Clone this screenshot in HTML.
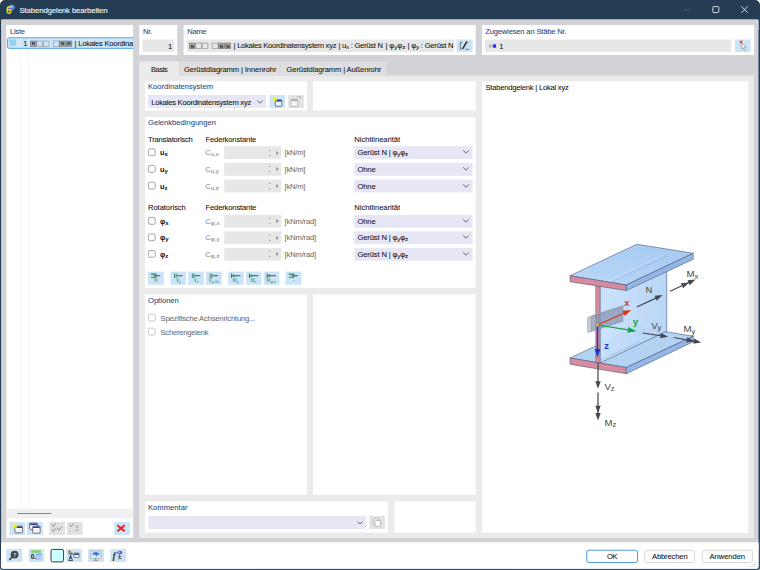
<!DOCTYPE html><html lang="de"><head><meta charset="utf-8"><title>Stabendgelenk bearbeiten</title><style>
html,body{margin:0;padding:0;}
body{width:760px;height:570px;overflow:hidden;background:#243c54;position:relative;font-family:"Liberation Sans", "DejaVu Sans", sans-serif;}
#w div,#w span.t,#w svg{position:absolute;}
#w{position:absolute;left:0;top:0;width:760px;height:570px;overflow:hidden;}
.t{white-space:nowrap;line-height:12px;height:12px;-webkit-text-stroke:0.07px currentColor;}
.t sub{font-size:82%;vertical-align:baseline;position:relative;top:1.1px;line-height:0;}
.cs sub{font-size:84%;top:0.9px;}
i.bn,i.be{display:inline-block;box-sizing:border-box;width:5.8px;height:5.7px;margin-right:0.55px;border:0.65px solid #666;font-style:normal;font-size:4.4px;line-height:4.4px;text-align:center;vertical-align:-0.9px;overflow:hidden;color:#222;font-weight:700;}
i.bn{background:#a2a2a2;border-color:#707070;-webkit-text-stroke:0;}
i.be{border-color:#9c9c9c;}
i.gap{display:inline-block;width:3.85px;}
#t1{letter-spacing:-0.168px;}#t2{letter-spacing:-0.269px;}#t4{letter-spacing:-0.24px;}#t6{letter-spacing:-0.291px;}#n1{letter-spacing:-0.267px;}#n2{letter-spacing:-0.276px;}#n3{letter-spacing:-0.062px;}#n4{letter-spacing:-0.203px;}#t7{letter-spacing:-0.173px;}#t9{letter-spacing:-0.456px;}#t10{letter-spacing:-0.113px;}#t11{letter-spacing:-0.139px;}#t12{letter-spacing:-0.001px;}#t13{letter-spacing:-0.245px;}#t14{letter-spacing:0.001px;}#t15{letter-spacing:-0.2px;}#t16{letter-spacing:-0.149px;}#t17{letter-spacing:-0.008px;}#t18{letter-spacing:-0.057px;}#t19{letter-spacing:-0.149px;}#t20{letter-spacing:-0.008px;}#t23{letter-spacing:-0.223px;}#t24{letter-spacing:-0.144px;}#t27{letter-spacing:-0.223px;}#t28{letter-spacing:-0.145px;}#t31{letter-spacing:-0.223px;}#t32{letter-spacing:-0.145px;}#t35{letter-spacing:-0.169px;}#t36{letter-spacing:-0.145px;}#t39{letter-spacing:-0.169px;}#t40{letter-spacing:-0.144px;}#t43{letter-spacing:-0.169px;}#t44{letter-spacing:-0.144px;}#t45{letter-spacing:-0.004px;}#t46{letter-spacing:-0.162px;}#t47{letter-spacing:-0.221px;}#t48{letter-spacing:0.028px;}#t49{letter-spacing:-0.217px;}#t50{letter-spacing:-0.492px;}#t51{letter-spacing:-0.137px;}#t52{letter-spacing:-0.049px;}#lrow{letter-spacing:-0.248px;}</style></head><body><div id="w"><svg style="left:0;top:0" width="760" height="570" viewBox="0 0 760 570"><rect x="0" y="0" width="760" height="570" fill="#fff"/><rect x="0" y="0" width="760" height="40" rx="5" fill="#243c54"/><rect x="0" y="20" width="760" height="550" fill="#e4e6e8"/><rect x="0" y="20" width="760" height="550" rx="2.5" fill="#3c5268"/><rect x="0" y="10" width="760" height="530" fill="#243c54"/><rect x="0" y="10" width="1" height="550" fill="#243c54"/><rect x="1.1" y="19.5" width="757.4" height="549.2" rx="2" fill="#d2d2d7"/><rect x="1.1" y="19.5" width="757.4" height="10.5" fill="#d2d2d7"/><rect x="1.1" y="542.6" width="757.4" height="26.1" rx="2" fill="#fff"/><rect x="1.1" y="542.6" width="757.4" height="7.4" fill="#fff"/><rect x="6.3" y="25" width="126.9" height="512.7" fill="#fff"/><rect x="20" y="37.5" width="0.6" height="471.0" fill="#eeeef1"/><rect x="28" y="37.5" width="0.6" height="471.0" fill="#eeeef1"/><rect x="7.45" y="37.75" width="132.1" height="10.6" rx="1.8" fill="#cde5f9" stroke="#4a9be0" stroke-width="0.9"/><rect x="133.2" y="30" width="6.0" height="30" fill="#d2d2d7"/><rect x="9.4" y="39.4" width="6.6" height="6.3" fill="#8fd2ee"/><rect x="20.1" y="38.2" width="0.5" height="9.7" fill="#e4effa"/><rect x="28.2" y="38.2" width="0.5" height="9.7" fill="#e4effa"/><rect x="6.3" y="508.7" width="126.9" height="9.6" fill="#f0f0f0"/><rect x="17.5" y="513.1" width="33.8" height="0.9" fill="#7a7a7a"/><rect x="9.5" y="522" width="15.5" height="13" fill="#cce4f7"/><rect x="27" y="522" width="15.8" height="13" fill="#cce4f7"/><rect x="49.3" y="522" width="15.7" height="13" fill="#e2e2e2"/><rect x="67" y="522" width="15.6" height="13" fill="#e2e2e2"/><rect x="114.3" y="522" width="15.7" height="13" fill="#cce4f7"/><rect x="139.2" y="25" width="38.0" height="30" fill="#fff"/><rect x="142.5" y="39.5" width="31.5" height="12.5" fill="#e7e7e7"/><rect x="183.6" y="25" width="292.1" height="30" fill="#fff"/><rect x="187" y="39.5" width="266.8" height="12.5" fill="#e7e7e7"/><rect x="456.5" y="39.5" width="16.0" height="12.5" fill="#cce4f7"/><rect x="482" y="25" width="272.2" height="30" fill="#fff"/><rect x="485" y="39.5" width="246.2" height="12.5" fill="#e7e7e7"/><rect x="489" y="44.5" width="2.5" height="3.0" fill="#b4b4b4"/><rect x="492.8" y="44.3" width="3.3" height="3.4" fill="#2a2aff"/><rect x="735" y="39.5" width="15.6" height="12.5" fill="#cce4f7"/><rect x="139.2" y="75.6" width="614.7" height="462.4" fill="#ebebeb"/><rect x="139.2" y="61.4" width="39.8" height="14.6" fill="#ebebeb"/><rect x="179.6" y="61.8" width="100.0" height="13.8" fill="#dfdfe1"/><rect x="280.3" y="61.8" width="105.7" height="13.8" fill="#dfdfe1"/><rect x="145" y="81.2" width="162" height="29.3" fill="#fff"/><rect x="148" y="95" width="118" height="13" fill="#e6e6f5"/><rect x="269.5" y="95" width="15.5" height="13" fill="#cce4f7"/><rect x="288.2" y="95" width="15.6" height="13" fill="#e2e2e2"/><rect x="313" y="81.2" width="162.7" height="29.3" fill="#fff"/><rect x="145" y="117" width="330.7" height="171" fill="#fff"/><rect x="148.38" y="148.77" width="6.85" height="6.85" rx="1.8" fill="#fff" stroke="#858585" stroke-width="0.75"/><rect x="224.2" y="146.2" width="57.0" height="12.8" fill="#e7e7e7"/><rect x="354.3" y="146.2" width="118.2" height="12.8" fill="#e6e6f5"/><rect x="148.38" y="165.47" width="6.85" height="6.85" rx="1.8" fill="#fff" stroke="#858585" stroke-width="0.75"/><rect x="224.2" y="162.9" width="57.0" height="12.8" fill="#e7e7e7"/><rect x="354.3" y="162.9" width="118.2" height="12.8" fill="#e6e6f5"/><rect x="148.38" y="182.17" width="6.85" height="6.85" rx="1.8" fill="#fff" stroke="#858585" stroke-width="0.75"/><rect x="224.2" y="179.6" width="57.0" height="12.8" fill="#e7e7e7"/><rect x="354.3" y="179.6" width="118.2" height="12.8" fill="#e6e6f5"/><rect x="148.38" y="217.47" width="6.85" height="6.85" rx="1.8" fill="#fff" stroke="#858585" stroke-width="0.75"/><rect x="224.2" y="214.9" width="57.0" height="12.8" fill="#e7e7e7"/><rect x="354.3" y="214.9" width="118.2" height="12.8" fill="#e6e6f5"/><rect x="148.38" y="233.87" width="6.85" height="6.85" rx="1.8" fill="#fff" stroke="#858585" stroke-width="0.75"/><rect x="224.2" y="231.3" width="57.0" height="12.8" fill="#e7e7e7"/><rect x="354.3" y="231.3" width="118.2" height="12.8" fill="#e6e6f5"/><rect x="148.38" y="250.47" width="6.85" height="6.85" rx="1.8" fill="#fff" stroke="#858585" stroke-width="0.75"/><rect x="224.2" y="247.9" width="57.0" height="12.8" fill="#e7e7e7"/><rect x="354.3" y="247.9" width="118.2" height="12.8" fill="#e6e6f5"/><rect x="148" y="271.6" width="15.8" height="13.2" fill="#cce4f7"/><rect x="170.5" y="271.6" width="15.7" height="13.2" fill="#cce4f7"/><rect x="188.3" y="271.6" width="15.5" height="13.2" fill="#cce4f7"/><rect x="206" y="271.6" width="15.7" height="13.2" fill="#cce4f7"/><rect x="228.3" y="271.6" width="15.5" height="13.2" fill="#cce4f7"/><rect x="245.8" y="271.6" width="15.5" height="13.2" fill="#cce4f7"/><rect x="263.7" y="271.6" width="15.6" height="13.2" fill="#cce4f7"/><rect x="285.5" y="271.6" width="16.0" height="13.2" fill="#cce4f7"/><rect x="145" y="294.3" width="162" height="200.3" fill="#fff"/><rect x="148.38" y="314.18" width="6.85" height="6.85" rx="1.8" fill="#fff" stroke="#b5b5b5" stroke-width="0.75"/><rect x="148.38" y="328.18" width="6.85" height="6.85" rx="1.8" fill="#fff" stroke="#b5b5b5" stroke-width="0.75"/><rect x="313" y="294.3" width="162.7" height="200.3" fill="#fff"/><rect x="145" y="501.2" width="243" height="31.4" fill="#fff"/><rect x="148.3" y="516" width="217.7" height="13" fill="#e6e6f5"/><rect x="369.4" y="516" width="15.4" height="13" fill="#e2e2e2"/><rect x="394.6" y="501.2" width="81.1" height="31.4" fill="#fff"/><rect x="482" y="81.2" width="266.3" height="451.4" fill="#fff"/><rect x="6.3" y="549" width="15.7" height="13" fill="#cce4f7"/><rect x="28.8" y="549" width="15.3" height="13" fill="#cce4f7"/><rect x="66.1" y="549" width="15.7" height="13" fill="#cce4f7"/><rect x="88.1" y="549" width="15.9" height="13" fill="#cce4f7"/><rect x="110.3" y="549" width="15.9" height="13" fill="#cce4f7"/><rect x="51.0" y="549.4" width="12.6" height="12.5" rx="1.5" fill="#ccffff" stroke="#3a3a3a" stroke-width="1.0"/><rect x="586.75" y="550.25" width="50.8" height="12.3" rx="2.2" fill="#fdfdfd" stroke="#3b8ad9" stroke-width="0.9"/><rect x="644.75" y="550.25" width="49.8" height="12.3" rx="2.2" fill="#fdfdfd" stroke="#d3d3d3" stroke-width="0.9"/><rect x="702.25" y="550.25" width="50.3" height="12.3" rx="2.2" fill="#fdfdfd" stroke="#d3d3d3" stroke-width="0.9"/></svg><span id="t1" class="t " style="left:19.4px;top:5.0px;font-size:7.9px;color:#fff;font-weight:400;">Stabendgelenk bearbeiten</span><svg style="left:0;top:0" width="24" height="19" viewBox="0 0 24 19">
<polygon points="8.2,7 11.6,4.4 15,6.4 14.2,9.6 11,11.4 8.6,10" fill="#4a7fc4"/>
<polygon points="8.2,7 11.6,4.4 15,6.4 11.6,8.6" fill="#7aa9e2"/>
<text x="6" y="14.3" font-family="Liberation Sans, sans-serif" font-weight="700" font-size="10" fill="#f6d624">6</text>
</svg><svg style="left:680px;top:0" width="76" height="19" viewBox="0 0 76 19">
<line x1="4" y1="10" x2="10.5" y2="10" stroke="#4b6178" stroke-width="0.9"/>
<rect x="32.8" y="6.6" width="6" height="6" rx="1" fill="none" stroke="#e8edf2" stroke-width="0.9"/>
<path d="M61.4 6.4 L67.8 12.8 M67.8 6.4 L61.4 12.8" stroke="#e8edf2" stroke-width="0.9" fill="none"/>
</svg><span id="t2" class="t " style="left:10px;top:26.0px;font-size:7.6px;color:#2c4682;font-weight:400;">Liste</span><span id="t3" class="t " style="left:23.2px;top:38.3px;font-size:7.6px;color:#111;font-weight:400;">1</span><div style="left:28.3px;top:37.6px;width:104.9px;height:12px;overflow:hidden"><span class="t" id="lrow" style="left:46.3px;top:0;font-size:7.6px;color:#111">| Lokales Koordinatensystem xyz</span></div><span id="t4" class="t " style="left:143px;top:26.0px;font-size:7.6px;color:#2c4682;font-weight:400;">Nr.</span><span id="t5" class="t " style="left:168px;top:40.7px;font-size:7.6px;color:#111;font-weight:400;">1</span><span id="t6" class="t " style="left:187.2px;top:26.0px;font-size:7.6px;color:#2c4682;font-weight:400;">Name</span><div style="left:188px;top:39.9px;width:265.6px;height:12px;overflow:hidden"><span class="t" id="n1" style="left:45.6px;top:0;font-size:7.6px;color:#111">| Lokales Koordinatensystem xyz</span><span class="t" id="n2" style="left:150.6px;top:0;font-size:7.6px;color:#111">| u<sub>x</sub> : Gerüst N</span><span class="t" id="n3" style="left:197.4px;top:0;font-size:7.6px;color:#111">| φ<sub>y</sub>φ<sub>z</sub></span><span class="t" id="n4" style="left:219.6px;top:0;font-size:7.6px;color:#111">| φ<sub>y</sub> : Gerüst N</span></div><span id="t7" class="t " style="left:485.2px;top:26.0px;font-size:7.6px;color:#2c4682;font-weight:400;">Zugewiesen an Stäbe Nr.</span><span id="t8" class="t " style="left:499.2px;top:40.7px;font-size:7.6px;color:#111;font-weight:400;">1</span><span id="t9" class="t " style="left:151px;top:64.2px;font-size:7.6px;color:#111;font-weight:400;">Basis</span><span id="t10" class="t " style="left:184px;top:64.2px;font-size:7.6px;color:#111;font-weight:400;">Gerüstdiagramm | Innenrohr</span><span id="t11" class="t " style="left:286.6px;top:64.2px;font-size:7.6px;color:#111;font-weight:400;">Gerüstdiagramm | Außenrohr</span><span id="t12" class="t " style="left:148px;top:81.4px;font-size:7.6px;color:#2c4682;font-weight:400;">Koordinatensystem</span><span id="t13" class="t " style="left:151.3px;top:96.5px;font-size:7.6px;color:#111;font-weight:400;">Lokales Koordinatensystem xyz</span><svg style="left:256px;top:98.5px" width="8" height="6" viewBox="0 0 8 6"><path d="M1.2 1.4 L4 4.2 L6.8 1.4" fill="none" stroke="#444" stroke-width="0.8"/></svg><span id="t14" class="t " style="left:148px;top:117.3px;font-size:7.6px;color:#2c4682;font-weight:400;">Gelenkbedingungen</span><span id="t15" class="t " style="left:148px;top:134.2px;font-size:7.6px;color:#111;font-weight:400;">Translatorisch</span><span id="t16" class="t " style="left:205.5px;top:134.2px;font-size:7.6px;color:#111;font-weight:400;">Federkonstante</span><span id="t17" class="t " style="left:354.3px;top:134.2px;font-size:7.6px;color:#111;font-weight:400;">Nichtlinearität</span><span id="t18" class="t " style="left:148px;top:202.3px;font-size:7.6px;color:#111;font-weight:400;">Rotatorisch</span><span id="t19" class="t " style="left:205.5px;top:202.3px;font-size:7.6px;color:#111;font-weight:400;">Federkonstante</span><span id="t20" class="t " style="left:354.3px;top:202.3px;font-size:7.6px;color:#111;font-weight:400;">Nichtlinearität</span><span id="t21" class="t " style="left:160px;top:147.3px;font-size:7.4px;color:#111;font-weight:700;-webkit-text-stroke:0;">u<sub>x</sub></span><span id="t22" class="t cs" style="left:205.3px;top:147.3px;font-size:7.4px;color:#8a8a8a;font-weight:400;">C<sub>u,x</sub></span><svg style="left:266px;top:146.6px" width="15" height="12" viewBox="0 0 15 12"><path d="M2.6 4.1 L3.8 2.7 L5 4.1 Z M2.6 8.1 L3.8 9.5 L5 8.1 Z" fill="#a2a2a2"/><path d="M10.2 4.1 L12.7 6.1 L10.2 8.1 Z" fill="#8f8f8f"/></svg><span id="t23" class="t " style="left:284.6px;top:147.3px;font-size:7.6px;color:#707070;font-weight:400;">[kN/m]</span><span id="t24" class="t " style="left:357.5px;top:147.3px;font-size:7.6px;color:#111;font-weight:400;">Gerüst N | φ<sub>y</sub>φ<sub>z</sub></span><svg style="left:462px;top:149.2px" width="8" height="6" viewBox="0 0 8 6"><path d="M1.2 1.4 L4 4.2 L6.8 1.4" fill="none" stroke="#444" stroke-width="0.8"/></svg><span id="t25" class="t " style="left:160px;top:164.0px;font-size:7.4px;color:#111;font-weight:700;-webkit-text-stroke:0;">u<sub>y</sub></span><span id="t26" class="t cs" style="left:205.3px;top:164.0px;font-size:7.4px;color:#8a8a8a;font-weight:400;">C<sub>u,y</sub></span><svg style="left:266px;top:163.3px" width="15" height="12" viewBox="0 0 15 12"><path d="M2.6 4.1 L3.8 2.7 L5 4.1 Z M2.6 8.1 L3.8 9.5 L5 8.1 Z" fill="#a2a2a2"/><path d="M10.2 4.1 L12.7 6.1 L10.2 8.1 Z" fill="#8f8f8f"/></svg><span id="t27" class="t " style="left:284.6px;top:164.0px;font-size:7.6px;color:#707070;font-weight:400;">[kN/m]</span><span id="t28" class="t " style="left:357.5px;top:164.0px;font-size:7.6px;color:#111;font-weight:400;">Ohne</span><svg style="left:462px;top:165.9px" width="8" height="6" viewBox="0 0 8 6"><path d="M1.2 1.4 L4 4.2 L6.8 1.4" fill="none" stroke="#444" stroke-width="0.8"/></svg><span id="t29" class="t " style="left:160px;top:180.7px;font-size:7.4px;color:#111;font-weight:700;-webkit-text-stroke:0;">u<sub>z</sub></span><span id="t30" class="t cs" style="left:205.3px;top:180.7px;font-size:7.4px;color:#8a8a8a;font-weight:400;">C<sub>u,z</sub></span><svg style="left:266px;top:180.0px" width="15" height="12" viewBox="0 0 15 12"><path d="M2.6 4.1 L3.8 2.7 L5 4.1 Z M2.6 8.1 L3.8 9.5 L5 8.1 Z" fill="#a2a2a2"/><path d="M10.2 4.1 L12.7 6.1 L10.2 8.1 Z" fill="#8f8f8f"/></svg><span id="t31" class="t " style="left:284.6px;top:180.7px;font-size:7.6px;color:#707070;font-weight:400;">[kN/m]</span><span id="t32" class="t " style="left:357.5px;top:180.7px;font-size:7.6px;color:#111;font-weight:400;">Ohne</span><svg style="left:462px;top:182.6px" width="8" height="6" viewBox="0 0 8 6"><path d="M1.2 1.4 L4 4.2 L6.8 1.4" fill="none" stroke="#444" stroke-width="0.8"/></svg><span id="t33" class="t " style="left:160px;top:216.0px;font-size:7.4px;color:#111;font-weight:700;-webkit-text-stroke:0;">φ<sub>x</sub></span><span id="t34" class="t cs" style="left:205.3px;top:216.0px;font-size:7.4px;color:#8a8a8a;font-weight:400;">C<sub>φ,x</sub></span><svg style="left:266px;top:215.3px" width="15" height="12" viewBox="0 0 15 12"><path d="M2.6 4.1 L3.8 2.7 L5 4.1 Z M2.6 8.1 L3.8 9.5 L5 8.1 Z" fill="#a2a2a2"/><path d="M10.2 4.1 L12.7 6.1 L10.2 8.1 Z" fill="#8f8f8f"/></svg><span id="t35" class="t " style="left:284.6px;top:216.0px;font-size:7.6px;color:#707070;font-weight:400;">[kNm/rad]</span><span id="t36" class="t " style="left:357.5px;top:216.0px;font-size:7.6px;color:#111;font-weight:400;">Ohne</span><svg style="left:462px;top:217.9px" width="8" height="6" viewBox="0 0 8 6"><path d="M1.2 1.4 L4 4.2 L6.8 1.4" fill="none" stroke="#444" stroke-width="0.8"/></svg><span id="t37" class="t " style="left:160px;top:232.4px;font-size:7.4px;color:#111;font-weight:700;-webkit-text-stroke:0;">φ<sub>y</sub></span><span id="t38" class="t cs" style="left:205.3px;top:232.4px;font-size:7.4px;color:#8a8a8a;font-weight:400;">C<sub>φ,y</sub></span><svg style="left:266px;top:231.7px" width="15" height="12" viewBox="0 0 15 12"><path d="M2.6 4.1 L3.8 2.7 L5 4.1 Z M2.6 8.1 L3.8 9.5 L5 8.1 Z" fill="#a2a2a2"/><path d="M10.2 4.1 L12.7 6.1 L10.2 8.1 Z" fill="#8f8f8f"/></svg><span id="t39" class="t " style="left:284.6px;top:232.4px;font-size:7.6px;color:#707070;font-weight:400;">[kNm/rad]</span><span id="t40" class="t " style="left:357.5px;top:232.4px;font-size:7.6px;color:#111;font-weight:400;">Gerüst N | φ<sub>y</sub>φ<sub>z</sub></span><svg style="left:462px;top:234.29999999999998px" width="8" height="6" viewBox="0 0 8 6"><path d="M1.2 1.4 L4 4.2 L6.8 1.4" fill="none" stroke="#444" stroke-width="0.8"/></svg><span id="t41" class="t " style="left:160px;top:249.0px;font-size:7.4px;color:#111;font-weight:700;-webkit-text-stroke:0;">φ<sub>z</sub></span><span id="t42" class="t cs" style="left:205.3px;top:249.0px;font-size:7.4px;color:#8a8a8a;font-weight:400;">C<sub>φ,z</sub></span><svg style="left:266px;top:248.3px" width="15" height="12" viewBox="0 0 15 12"><path d="M2.6 4.1 L3.8 2.7 L5 4.1 Z M2.6 8.1 L3.8 9.5 L5 8.1 Z" fill="#a2a2a2"/><path d="M10.2 4.1 L12.7 6.1 L10.2 8.1 Z" fill="#8f8f8f"/></svg><span id="t43" class="t " style="left:284.6px;top:249.0px;font-size:7.6px;color:#707070;font-weight:400;">[kNm/rad]</span><span id="t44" class="t " style="left:357.5px;top:249.0px;font-size:7.6px;color:#111;font-weight:400;">Gerüst N | φ<sub>y</sub>φ<sub>z</sub></span><svg style="left:462px;top:250.9px" width="8" height="6" viewBox="0 0 8 6"><path d="M1.2 1.4 L4 4.2 L6.8 1.4" fill="none" stroke="#444" stroke-width="0.8"/></svg><span id="t45" class="t " style="left:148px;top:295.3px;font-size:7.6px;color:#2c4682;font-weight:400;">Optionen</span><span id="t46" class="t " style="left:160.5px;top:312.6px;font-size:7.6px;color:#6e6e6e;font-weight:400;">Spezifische Achsenrichtung...</span><span id="t47" class="t " style="left:160.5px;top:326.6px;font-size:7.6px;color:#6e6e6e;font-weight:400;">Scherengelenk</span><span id="t48" class="t " style="left:148px;top:502.3px;font-size:7.6px;color:#2c4682;font-weight:400;">Kommentar</span><svg style="left:356px;top:520px" width="8" height="6" viewBox="0 0 8 6"><path d="M1.6 1.6 L4 4 L6.4 1.6" fill="none" stroke="#444" stroke-width="0.8"/></svg><span id="t49" class="t " style="left:485.5px;top:81.9px;font-size:7.6px;color:#111;font-weight:400;">Stabendgelenk | Lokal xyz</span><span id="t50" class="t " style="left:607px;top:551.3px;font-size:7.6px;color:#111;font-weight:400;">OK</span><span id="t51" class="t " style="left:652px;top:551.3px;font-size:7.6px;color:#111;font-weight:400;">Abbrechen</span><span id="t52" class="t " style="left:709.5px;top:551.3px;font-size:7.6px;color:#111;font-weight:400;">Anwenden</span><svg style="left:0;top:0" width="760" height="570" viewBox="0 0 760 570"><rect x="14.9" y="526.1" width="7.5" height="6.7" rx="0.6" fill="#fff" stroke="#3d3d3d" stroke-width="0.7"/><rect x="15.3" y="526.5" width="6.7" height="1.5" fill="#24408e"/><line x1="15.700000000000001" y1="529.3000000000001" x2="21.599999999999998" y2="529.3000000000001" stroke="#d8d8d8" stroke-width="0.4"/><line x1="15.700000000000001" y1="530.7" x2="21.599999999999998" y2="530.7" stroke="#d8d8d8" stroke-width="0.4"/><polygon points="14.9,523.16 15.42,524.75 16.9,524.0 16.15,525.48 17.73,526.0 16.15,526.52 16.9,528.0 15.42,527.25 14.9,528.84 14.38,527.25 12.9,528.0 13.65,526.52 12.06,526.0 13.65,525.48 12.9,524.0 14.38,524.75" fill="#fbf04a" stroke="#f3e97a" stroke-width="0.25"/><circle cx="14.9" cy="526" r="1.42" fill="#fff200"/><rect x="29.7" y="523.1" width="7.7" height="6.2" rx="0.6" fill="#fff" stroke="#3d3d3d" stroke-width="0.7"/><rect x="30.099999999999998" y="523.5" width="6.9" height="1.5" fill="#24408e"/><line x1="30.5" y1="526.3000000000001" x2="36.6" y2="526.3000000000001" stroke="#d8d8d8" stroke-width="0.4"/><line x1="30.5" y1="527.7" x2="36.6" y2="527.7" stroke="#d8d8d8" stroke-width="0.4"/><rect x="32.7" y="526.1" width="7.4" height="6.9" rx="0.6" fill="#fff" stroke="#3d3d3d" stroke-width="0.7"/><rect x="33.1" y="526.5" width="6.6" height="1.5" fill="#24408e"/><line x1="33.5" y1="529.3000000000001" x2="39.300000000000004" y2="529.3000000000001" stroke="#d8d8d8" stroke-width="0.4"/><line x1="33.5" y1="530.7" x2="39.300000000000004" y2="530.7" stroke="#d8d8d8" stroke-width="0.4"/><path d="M51.92 524.38 L53.3 526.75 L55.92 523.38" fill="none" stroke="#909090" stroke-width="0.95"/><path d="M51.92 529.17 L53.3 531.55 L55.92 528.17" fill="none" stroke="#909090" stroke-width="0.95"/><path d="M57.15 527.65 L58.8 530.5 L61.95 526.45" fill="none" stroke="#909090" stroke-width="0.95"/><path d="M69.72 524.38 L71.1 526.75 L73.72 523.38" fill="none" stroke="#909090" stroke-width="0.95"/><path d="M75 526 h4 M75.6 527.3 h3" stroke="#a0a0a0" stroke-width="0.6"/><rect x="70.2" y="529" width="2.8" height="2.8" fill="#fafafa" stroke="#bdbdbd" stroke-width="0.5"/><path d="M75 529.6 h4 M75.6 530.9 h3" stroke="#a0a0a0" stroke-width="0.6"/><path d="M117.4 525.2 L124.6 531.3 M124.6 525.2 L117.4 531.3" stroke="#ee1c24" stroke-width="2" fill="none"/><rect x="275.3" y="99.7" width="6.5" height="6.5" rx="0.6" fill="#fff" stroke="#3d3d3d" stroke-width="0.7"/><rect x="275.7" y="100.10000000000001" width="5.7" height="1.5" fill="#24408e"/><line x1="276.1" y1="102.9" x2="281.0" y2="102.9" stroke="#d8d8d8" stroke-width="0.4"/><line x1="276.1" y1="104.3" x2="281.0" y2="104.3" stroke="#d8d8d8" stroke-width="0.4"/><polygon points="274.7,96.27 275.22,97.85 276.7,97.1 275.95,98.58 277.53,99.1 275.95,99.62 276.7,101.1 275.22,100.35 274.7,101.93 274.18,100.35 272.7,101.1 273.45,99.62 271.87,99.1 273.45,98.58 272.7,97.1 274.18,97.85" fill="#fbf04a" stroke="#f3e97a" stroke-width="0.25"/><circle cx="274.7" cy="99.1" r="1.42" fill="#fff200"/><rect x="291" y="99.3" width="6.8" height="7.0" rx="0.6" fill="#fff" stroke="#9a9a9a" stroke-width="0.7"/><rect x="291.4" y="99.7" width="6.0" height="1.5" fill="#a8a8a8"/><line x1="291.8" y1="102.5" x2="297.0" y2="102.5" stroke="#d8d8d8" stroke-width="0.4"/><line x1="291.8" y1="103.89999999999999" x2="297.0" y2="103.89999999999999" stroke="#d8d8d8" stroke-width="0.4"/><path d="M296.2 98 C297.4 96.2 299.6 96 300.6 97.4 M300.8 96 L300.7 97.7 L299.2 97.5" fill="none" stroke="#aaa" stroke-width="0.6"/><path d="M462.2 42.4 H460.3 V49.1 H462.2" fill="none" stroke="#555" stroke-width="0.8"/><path d="M462.6 48.9 L466.9 41.5" stroke="#333" stroke-width="1.5" fill="none"/><path d="M465 49.2 H469.4" stroke="#666" stroke-width="0.7"/><circle cx="468.9" cy="42.4" r="0.45" fill="#555"/><path d="M739.7 40.6 L742.4 43.2 M742.4 40.6 L739.7 43.2" stroke="#e8141c" stroke-width="0.9"/><path d="M741.6 43.2 L741.6 49 L743.1 47.7 L744.4 50.3 L745.5 49.8 L744.3 47.3 L746.3 47.2 Z" fill="#f4f4f4" stroke="#8a8a8a" stroke-width="0.6"/><path d="M151 274.1 H156.4 M151 277.3 H156.4 M155.9 274.1 V277.3" stroke="#1f8a5c" stroke-width="1.1" fill="none"/><path d="M153.8 275.7 H160.3" stroke="#666" stroke-width="1.2"/><text x="156" y="282.4" text-anchor="middle" font-family="Liberation Sans, sans-serif" font-size="4.6" fill="#1f8a5c">N</text><path d="M174.6 273.5 V278 M176.2 273.5 V278" stroke="#1f8a5c" stroke-width="0.9"/><path d="M176.79999999999998 275.7 H182.5" stroke="#666" stroke-width="1.2"/><text x="178.3" y="282.4" text-anchor="middle" font-family="Liberation Sans, sans-serif" font-size="4.6" fill="#1f8a5c">V<tspan font-size="3.4" dy="0.6">y</tspan></text><path d="M192.4 273.5 V278 M194 273.5 V278" stroke="#1f8a5c" stroke-width="0.9"/><path d="M194.6 275.7 H200.3" stroke="#666" stroke-width="1.2"/><text x="196.1" y="282.4" text-anchor="middle" font-family="Liberation Sans, sans-serif" font-size="4.6" fill="#1f8a5c">V<tspan font-size="3.4" dy="0.6">z</tspan></text><path d="M210.20000000000002 273.5 V278 M211.8 273.5 V278" stroke="#1f8a5c" stroke-width="0.9"/><path d="M212.4 275.7 H218.10000000000002" stroke="#666" stroke-width="1.2"/><text x="213.8" y="282.4" text-anchor="middle" font-family="Liberation Sans, sans-serif" font-size="4.6" fill="#1f8a5c">V<tspan font-size="3.4" dy="0.6">y=Vz</tspan></text><path d="M231.7 273.5 V278" stroke="#444" stroke-width="0.9"/><circle cx="233.7" cy="275.7" r="1.2" fill="#1f8a5c"/><path d="M234.7 275.7 H240.4" stroke="#666" stroke-width="1.2"/><text x="235.6" y="282.4" text-anchor="middle" font-family="Liberation Sans, sans-serif" font-size="4.6" fill="#1f8a5c">M<tspan font-size="3.4" dy="0.6">y</tspan></text><path d="M249.5 273.5 V278" stroke="#444" stroke-width="0.9"/><circle cx="251.5" cy="275.7" r="1.2" fill="#1f8a5c"/><path d="M252.5 275.7 H258.2" stroke="#666" stroke-width="1.2"/><text x="253.4" y="282.4" text-anchor="middle" font-family="Liberation Sans, sans-serif" font-size="4.6" fill="#1f8a5c">M<tspan font-size="3.4" dy="0.6">z</tspan></text><path d="M267.20000000000005 273.5 V278" stroke="#444" stroke-width="0.9"/><circle cx="269.20000000000005" cy="275.7" r="1.2" fill="#1f8a5c"/><path d="M270.20000000000005 275.7 H275.90000000000003" stroke="#666" stroke-width="1.2"/><text x="271.2" y="282.4" text-anchor="middle" font-family="Liberation Sans, sans-serif" font-size="4.6" fill="#1f8a5c">M<tspan font-size="3.4" dy="0.6">y=z</tspan></text><path d="M288.8 274.1 H294.2 M288.8 277.3 H294.2 M293.7 274.1 V277.3" stroke="#1f8a5c" stroke-width="1.1" fill="none"/><path d="M291.6 275.7 H298.1" stroke="#666" stroke-width="1.2"/><text x="293.7" y="282.4" text-anchor="middle" font-family="Liberation Sans, sans-serif" font-size="4.6" fill="#1f8a5c">-</text><path d="M12 557.2 L9.9 559.4" stroke="#454545" stroke-width="1.7" stroke-linecap="round"/><circle cx="14.6" cy="554.6" r="3.9" fill="#484848"/><text x="14.7" y="556.7" text-anchor="middle" font-family="Liberation Sans, sans-serif" font-weight="700" font-size="5.6" fill="#c9d6e2">?</text><rect x="31.1" y="550.4" width="9.9" height="2.4" fill="#80d062"/><rect x="35.8" y="553.6" width="5.6" height="5.8" fill="#7d9ff0"/><text x="30.7" y="559" font-family="Liberation Sans, sans-serif" font-weight="700" font-size="6.6" fill="#1a1a1a">0.</text><text x="35.9" y="558.9" font-family="Liberation Sans, sans-serif" font-weight="700" font-size="5.4" fill="#dfe8ff" textLength="5.4" lengthAdjust="spacingAndGlyphs">00</text><rect x="68.5" y="550.7" width="2" height="1.9" fill="#ee1c24"/><rect x="70.6" y="550.7" width="2" height="1.9" fill="#ffe800"/><rect x="68.5" y="552.7" width="2" height="1.8" fill="#22b14c"/><rect x="70.6" y="552.7" width="2" height="1.8" fill="#2a3cff"/><path d="M70.6 554.8 V558 M70.6 555.6 L68.8 560.4 M70.6 555.6 L72.5 560.4 M68.6 560.5 H72.8 M69.4 558.4 H71.8" stroke="#333" stroke-width="0.8" fill="none"/><rect x="73.8" y="553.1" width="5.2" height="4.4" rx="0.6" fill="#fff" stroke="#3d3d3d" stroke-width="0.7"/><rect x="74.2" y="553.5" width="4.4" height="1.5" fill="#24408e"/><line x1="74.6" y1="556.3000000000001" x2="78.2" y2="556.3000000000001" stroke="#d8d8d8" stroke-width="0.4"/><line x1="74.6" y1="557.7" x2="78.2" y2="557.7" stroke="#d8d8d8" stroke-width="0.4"/><rect x="90.4" y="551" width="10.6" height="7.4" rx="0.5" fill="#dfe9f3" stroke="#9aa3ad" stroke-width="0.6"/><path d="M91.6 554.6 C93 552.2 95.4 551.6 96.8 552.2 C98.4 552.4 99.6 553.4 100.2 554.8 C98.8 554.2 97.6 555 96.6 556.6 C95.6 554.8 93.6 554 91.6 554.6 Z" fill="#3d7fd0"/><path d="M95.6 558.4 V560.2 M93.2 560.3 H98.2" stroke="#777" stroke-width="0.7"/><text x="112.6" y="559.3" font-family="Liberation Serif, serif" font-style="italic" font-weight="700" font-size="10" fill="#333">f</text><ellipse cx="119.8" cy="552.6" rx="2.5" ry="1.9" fill="#5a63c8"/><ellipse cx="119.4" cy="552.2" rx="1" ry="0.7" fill="#c5caf2"/><path d="M119.6 554.4 V558.2 M117.6 556.6 H121.4 M117.8 558.6 H121.6" stroke="#444" stroke-width="0.7"/><rect x="373.2" y="518.6" width="5.6" height="6" rx="0.6" fill="#f4f4f4" stroke="#a8a8a8" stroke-width="0.6"/><rect x="375" y="520.4" width="5.6" height="6" rx="0.6" fill="#fcfcfc" stroke="#9a9a9a" stroke-width="0.6"/><g fill="#b8b8b8"><rect x="754.6" y="566" width="1" height="1"/><rect x="752.6" y="566" width="1" height="1"/><rect x="754.6" y="564" width="1" height="1"/><rect x="750.6" y="566" width="1" height="1"/><rect x="752.6" y="564" width="1" height="1"/><rect x="754.6" y="562" width="1" height="1"/></g><rect x="189.4" y="43.1" width="5.8" height="5.6" fill="#a4a4a4" stroke="#727272" stroke-width="0.6"/><text x="192.3" y="47.5" text-anchor="middle" font-family="Liberation Sans, sans-serif" font-weight="700" font-size="4.4" fill="#222">N</text><rect x="195.75" y="43.1" width="5.8" height="5.6" fill="none" stroke="#8c8c8c" stroke-width="0.6"/><rect x="202.1" y="43.1" width="5.8" height="5.6" fill="none" stroke="#8c8c8c" stroke-width="0.6"/><rect x="212.2" y="43.1" width="5.8" height="5.6" fill="none" stroke="#8c8c8c" stroke-width="0.6"/><rect x="218.55" y="43.1" width="5.8" height="5.6" fill="#a4a4a4" stroke="#727272" stroke-width="0.6"/><text x="221.45" y="47.5" text-anchor="middle" font-family="Liberation Sans, sans-serif" font-weight="700" font-size="4.4" fill="#222">N</text><rect x="224.9" y="43.1" width="5.8" height="5.6" fill="#a4a4a4" stroke="#727272" stroke-width="0.6"/><text x="227.8" y="47.5" text-anchor="middle" font-family="Liberation Sans, sans-serif" font-weight="700" font-size="4.4" fill="#222">N</text><rect x="30.5" y="41" width="5.8" height="5.6" fill="#a4a4a4" stroke="#727272" stroke-width="0.6"/><text x="33.4" y="45.4" text-anchor="middle" font-family="Liberation Sans, sans-serif" font-weight="700" font-size="4.4" fill="#222">N</text><rect x="36.85" y="41" width="5.8" height="5.6" fill="none" stroke="#8c8c8c" stroke-width="0.6"/><rect x="43.2" y="41" width="5.8" height="5.6" fill="none" stroke="#8c8c8c" stroke-width="0.6"/><rect x="53.3" y="41" width="5.8" height="5.6" fill="none" stroke="#8c8c8c" stroke-width="0.6"/><rect x="59.65" y="41" width="5.8" height="5.6" fill="#a4a4a4" stroke="#727272" stroke-width="0.6"/><text x="62.55" y="45.4" text-anchor="middle" font-family="Liberation Sans, sans-serif" font-weight="700" font-size="4.4" fill="#222">N</text><rect x="66.0" y="41" width="5.8" height="5.6" fill="#a4a4a4" stroke="#727272" stroke-width="0.6"/><text x="68.9" y="45.4" text-anchor="middle" font-family="Liberation Sans, sans-serif" font-weight="700" font-size="4.4" fill="#222">N</text></svg><svg style="left:0;top:0" width="760" height="570" viewBox="0 0 760 570"><defs><linearGradient id="gw" x1="0" x2="1" y1="0" y2="0"><stop offset="0" stop-color="#c9e1fb"/><stop offset="1" stop-color="#b4d3f6"/></linearGradient><linearGradient id="gt" x1="0" x2="1" y1="1" y2="0"><stop offset="0" stop-color="#b9d8f8"/><stop offset="1" stop-color="#a6c9f1"/></linearGradient></defs><polygon points="570,358 626.25,367.5 693.25,336.25 636.75,326.75" fill="#b3d3f5" stroke="#4d5878" stroke-width="0.6" stroke-linejoin="round" fill-opacity="1"/><polygon points="570,358 626.25,367.5 626.25,373.75 570,364.25" fill="#d68b9e" stroke="#4d5878" stroke-width="0.6" stroke-linejoin="round" fill-opacity="1"/><polygon points="626.25,367.5 693.25,336.25 693.25,341.75 626.25,373.75" fill="#93b6e6" stroke="#4d5878" stroke-width="0.6" stroke-linejoin="round" fill-opacity="1"/><polygon points="600,286.4 666.75,255.4 666.75,331.25 600,363" fill="url(#gw)" stroke="#4d5878" stroke-width="0.6" stroke-linejoin="round" fill-opacity="0.94"/><line x1="595.75" y1="362.3" x2="640" y2="341.5" stroke="#4d5878" stroke-width="0.4" opacity="0.5"/><polygon points="595.75,285.8 600,286.4 600,363 595.75,362.3" fill="#d68b9e" stroke="#4d5878" stroke-width="0.5" stroke-linejoin="round" fill-opacity="1"/><polygon points="570,275.75 636.75,244.25 693.25,253.25 626.25,285" fill="url(#gt)" stroke="#4d5878" stroke-width="0.6" stroke-linejoin="round" fill-opacity="1"/><line x1="608" y1="281" x2="662" y2="255.5" stroke="#fff" stroke-width="0.5" opacity="0.55"/><line x1="612" y1="282" x2="666" y2="256.5" stroke="#4d5878" stroke-width="0.4" opacity="0.35"/><line x1="666.75" y1="255.8" x2="666.75" y2="272" stroke="#4d5878" stroke-width="0.4" opacity="0.4"/><polygon points="570,275.75 626.25,285 626.25,290.5 570,281.75" fill="#d68b9e" stroke="#4d5878" stroke-width="0.6" stroke-linejoin="round" fill-opacity="1"/><polygon points="626.25,285 693.25,253.25 693.25,259.25 626.25,290.5" fill="#93b6e6" stroke="#4d5878" stroke-width="0.6" stroke-linejoin="round" fill-opacity="1"/><polygon points="591.3,316.3 594.8,314.2 626.2,304.4 622.9,306.3" fill="#c9cfdf" stroke="#8a92a8" stroke-width="0.3" stroke-linejoin="round" fill-opacity="0.85"/><polygon points="591.3,316.3 622.9,306.3 622.9,321.2 591.3,331.6" fill="#8792ae" stroke="#6f7890" stroke-width="0.4" stroke-linejoin="round" fill-opacity="0.72"/><polygon points="587.6,317.4 591.3,316.3 591.3,331.6 587.6,332.6" fill="#c6cad6" stroke="#7a8094" stroke-width="0.4" stroke-linejoin="round" fill-opacity="1"/><line x1="597.5" y1="325" x2="625.11" y2="312.73" stroke="#d63a14" stroke-width="1.25"/><polygon points="631.25,310 624.75,316.06 622.4,310.76" fill="#d63a14"/><line x1="597.5" y1="325" x2="629.62" y2="330.18" stroke="#16a040" stroke-width="1.25"/><polygon points="636.25,331.25 627.5,332.78 628.42,327.05" fill="#16a040"/><line x1="597.5" y1="325" x2="597.5" y2="350.62" stroke="#1438c8" stroke-width="1.4"/><polygon points="597.5,357.5 594.7,348.9 600.3,348.9" fill="#1438c8"/><circle cx="597.5" cy="325" r="1.3" fill="#e6d23c" stroke="#a89a20" stroke-width="0.3"/><text x="624.3" y="305.9" font-family="Liberation Sans, sans-serif" font-size="9.4" font-weight="700" fill="#d63a14">x</text><text x="633" y="325.2" font-family="Liberation Sans, sans-serif" font-size="9.4" font-weight="700" fill="#16a040">y</text><text x="604.2" y="349.4" font-family="Liberation Sans, sans-serif" font-size="9.4" font-weight="700" fill="#1438c8">z</text><line x1="636.75" y1="307" x2="656.99" y2="297.57" stroke="#474755" stroke-width="1.25"/><polygon points="662.5,295 656.75,300.66 654.47,295.76" fill="#474755"/><line x1="670" y1="291.25" x2="689.98" y2="282.04" stroke="#474755" stroke-width="1.25"/><polygon points="695.5,279.5 689.73,285.13 687.47,280.23" fill="#474755"/><polygon points="688.94,282.52 683.17,288.15 680.91,283.25" fill="#474755"/><line x1="642.5" y1="333" x2="661.98" y2="335.87" stroke="#474755" stroke-width="1.25"/><polygon points="668,336.75 660.09,338.32 660.87,332.97" fill="#474755"/><line x1="673.75" y1="337.5" x2="695.27" y2="341.41" stroke="#474755" stroke-width="1.25"/><polygon points="701.25,342.5 693.29,343.8 694.26,338.48" fill="#474755"/><polygon points="694.15,341.21 686.19,342.51 687.15,337.19" fill="#474755"/><line x1="598" y1="363" x2="598.0" y2="382.67" stroke="#474755" stroke-width="1.25"/><polygon points="598,388.75 595.3,381.15 600.7,381.15" fill="#474755"/><line x1="598" y1="392.5" x2="598.0" y2="414.42" stroke="#474755" stroke-width="1.25"/><polygon points="598,420.5 595.3,412.9 600.7,412.9" fill="#474755"/><polygon points="598.0,413.28 595.3,405.68 600.7,405.68" fill="#474755"/><text x="645.4" y="293" font-family="Liberation Sans, sans-serif" font-size="9.6" font-weight="400" fill="#444">N</text><text x="686.6" y="277.4" font-family="Liberation Sans, sans-serif" font-size="9.6" font-weight="400" fill="#444">M<tspan font-size="7.5" dy="1.6">x</tspan></text><text x="651.2" y="328.6" font-family="Liberation Sans, sans-serif" font-size="9.6" font-weight="400" fill="#444">V<tspan font-size="7.5" dy="1.6">y</tspan></text><text x="683.6" y="332.4" font-family="Liberation Sans, sans-serif" font-size="9.6" font-weight="400" fill="#444">M<tspan font-size="7.5" dy="1.6">y</tspan></text><text x="604.4" y="389.6" font-family="Liberation Sans, sans-serif" font-size="9.6" font-weight="400" fill="#444">V<tspan font-size="7.5" dy="1.6">z</tspan></text><text x="604.4" y="425.6" font-family="Liberation Sans, sans-serif" font-size="9.6" font-weight="400" fill="#444">M<tspan font-size="7.5" dy="1.6">z</tspan></text></svg></div></body></html>
